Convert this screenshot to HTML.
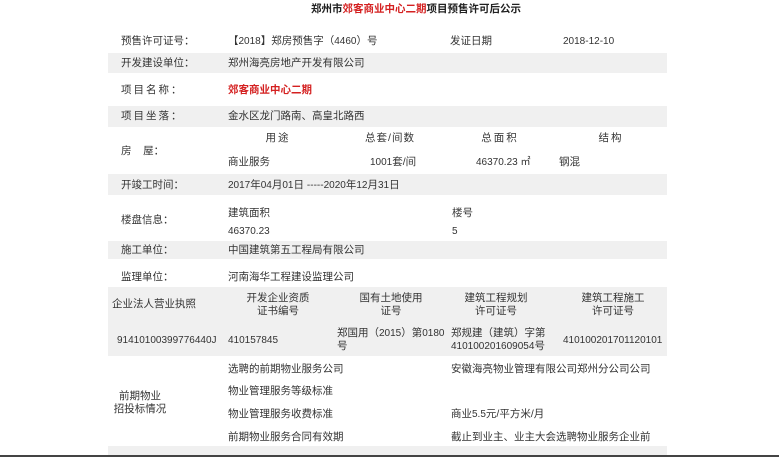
<!DOCTYPE html>
<html><head><meta charset="utf-8"><style>
body{margin:0;width:779px;height:457px;background:#fff;position:relative;overflow:hidden;font-family:"Liberation Sans","Noto Sans CJK SC",sans-serif;font-size:10.5px;color:#333}
div{position:absolute;white-space:nowrap;line-height:13px}
.b{background:#f0f0f0;left:108px;width:559px}
.r{color:#d42020}
.c{text-align:center;transform:translateX(-50%)}
.n{font-size:10px}
</style></head><body>
<div class="b" style="top:53px;height:20px"></div>
<div class="b" style="top:106px;height:21px"></div>
<div class="b" style="top:174px;height:21px"></div>
<div class="b" style="top:241px;height:18px"></div>
<div class="b" style="top:287px;height:69px"></div>
<div class="b" style="top:446px;height:9px"></div>
<div style="left:0;top:455px;width:779px;height:2px;background:#444"></div>

<div style="left:311px;top:3px;font-weight:bold;color:#222">郑州市<span class="r">郊客商业中心二期</span>项目预售许可后公示</div>

<div style="left:121px;top:35px">预售许可证号：</div>
<div style="left:228px;top:35px">【<span class="n">2018</span>】郑房预售字（<span class="n">4460</span>）号</div>
<div style="left:450px;top:35px">发证日期</div>
<div style="left:563px;top:35px" class="n">2018-12-10</div>

<div style="left:121px;top:57px">开发建设单位：</div>
<div style="left:228px;top:57px">郑州海亮房地产开发有限公司</div>

<div style="left:121px;top:84px;letter-spacing:2px">项目名称：</div>
<div style="left:228px;top:84px;font-weight:bold" class="r">郊客商业中心二期</div>

<div style="left:121px;top:110px;letter-spacing:2px">项目坐落：</div>
<div style="left:228px;top:110px">金水区龙门路南、高皇北路西</div>

<div style="left:121px;top:145px">房&nbsp;&nbsp;&nbsp;&nbsp;屋：</div>
<div class="c" style="left:278px;top:132px;letter-spacing:2px">用途</div>
<div class="c" style="left:390px;top:132px;letter-spacing:1px">总套/间数</div>
<div class="c" style="left:500px;top:132px;letter-spacing:2px">总面积</div>
<div class="c" style="left:611px;top:132px;letter-spacing:2px">结构</div>
<div style="left:228px;top:156px">商业服务</div>
<div style="left:370px;top:156px"><span class="n">1001</span>套/间</div>
<div style="left:476px;top:156px" class="n">46370.23 ㎡</div>
<div style="left:559px;top:156px">钢混</div>

<div style="left:121px;top:179px">开竣工时间：</div>
<div style="left:228px;top:179px"><span class="n">2017</span>年<span class="n">04</span>月<span class="n">01</span>日 <span class="n">-----2020</span>年<span class="n">12</span>月<span class="n">31</span>日</div>

<div style="left:121px;top:214px">楼盘信息：</div>
<div style="left:228px;top:207px">建筑面积</div>
<div style="left:452px;top:207px">楼号</div>
<div style="left:228px;top:225px" class="n">46370.23</div>
<div style="left:452px;top:225px" class="n">5</div>

<div style="left:121px;top:244px">施工单位：</div>
<div style="left:228px;top:244px">中国建筑第五工程局有限公司</div>
<div style="left:121px;top:271px">监理单位：</div>
<div style="left:228px;top:271px">河南海华工程建设监理公司</div>

<div class="c" style="left:154px;top:298px">企业法人营业执照</div>
<div class="c" style="left:278px;top:292px;text-align:center">开发企业资质<br>证书编号</div>
<div class="c" style="left:391px;top:292px;text-align:center">国有土地使用<br>证号</div>
<div class="c" style="left:496px;top:292px;text-align:center">建筑工程规划<br>许可证号</div>
<div class="c" style="left:613px;top:292px;text-align:center">建筑工程施工<br>许可证号</div>
<div style="left:117px;top:334px" class="n">91410100399776440J</div>
<div style="left:228px;top:334px" class="n">410157845</div>
<div style="left:337px;top:327px">郑国用（<span class="n">2015</span>）第<span class="n">0180</span><br>号</div>
<div style="left:451px;top:327px">郑规建（建筑）字第<br><span class="n">410100201609054</span>号</div>
<div style="left:563px;top:334px" class="n">410100201701120101</div>

<div class="c" style="left:140px;top:390px;text-align:center">前期物业<br>招投标情况</div>
<div style="left:228px;top:363px">选聘的前期物业服务公司</div>
<div style="left:451px;top:363px">安徽海亮物业管理有限公司郑州分公司公司</div>
<div style="left:228px;top:385px">物业管理服务等级标准</div>
<div style="left:228px;top:408px">物业管理服务收费标准</div>
<div style="left:451px;top:408px">商业<span class="n">5.5</span>元/平方米/月</div>
<div style="left:228px;top:431px">前期物业服务合同有效期</div>
<div style="left:451px;top:431px">截止到业主、业主大会选聘物业服务企业前</div>
</body></html>
